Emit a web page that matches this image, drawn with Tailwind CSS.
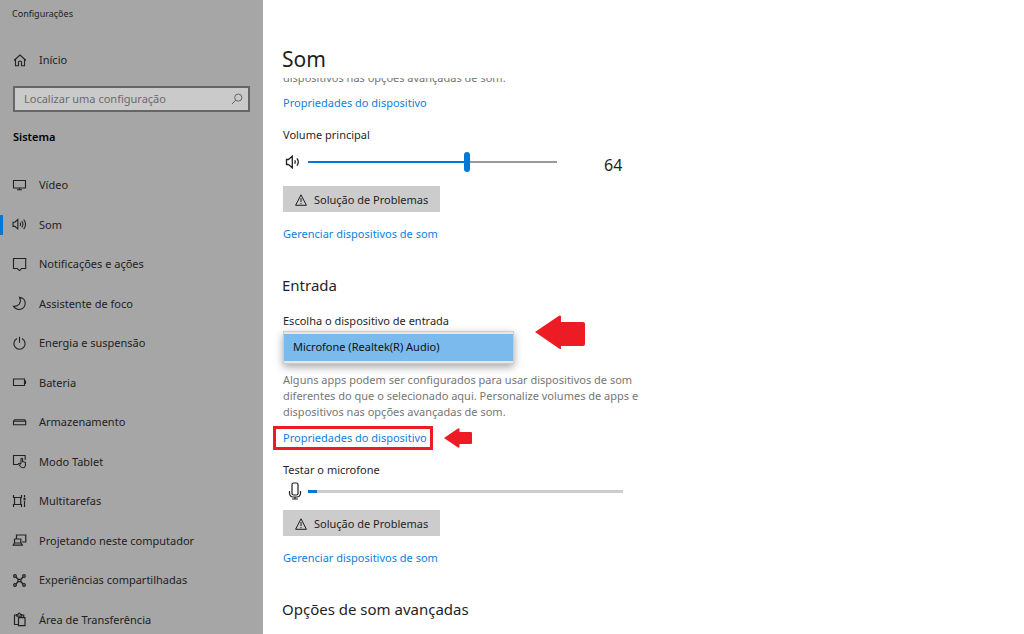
<!DOCTYPE html>
<html lang="pt-BR">
<head>
<meta charset="utf-8">
<meta name="viewport" content="width=device-width, initial-scale=1">
<title>Configurações - Som</title>
<script src="https://cdn.jsdelivr.net/npm/@tailwindcss/browser@4"></script>
</head>
<body class="flex h-screen overflow-hidden bg-white font-['Noto_Sans','Open_Sans',sans-serif] text-[11px] leading-4 text-[#1f1f1f]">

<aside class="flex w-[263px] shrink-0 flex-col bg-[#a6a6a6] text-[#222]">
  <p class="pt-[6px] pl-3 text-[9px] leading-4">Configurações</p>
  <a href="#" class="mt-[30px] flex h-4 items-center gap-3 pl-[13px]">
    <svg class="size-[14px]" viewBox="0 0 14 14" fill="none" stroke="currentColor" stroke-width="1.1"><path d="M1 7.500 7 2l6 5.500M2.500 6.500v6.200h3V9q0-1 1.500-1t1.500 1v3.700h3V6.500"/></svg>
    Início
  </a>
  <label class="relative mt-[18px] mr-[13px] ml-[13px] flex h-[26px] items-center border-2 border-[#666] bg-[#cacaca]">
    <input type="search" aria-label="Localizar uma configuração" placeholder="Localizar uma configuração" class="min-w-0 flex-1 bg-transparent pl-[9px] outline-none placeholder:text-[#6a6a6a]">
    <svg class="mr-[5px] size-3 shrink-0" viewBox="0 0 12 12" fill="none" stroke="#666" stroke-width="1"><circle cx="7.3" cy="4.6" r="3.6"/><path d="M4.7 7.2 1 11"/></svg>
  </label>
  <h1 class="mt-[17px] pl-[13px] font-semibold text-black">Sistema</h1>

  <nav class="mt-[26px] flex flex-1 flex-col justify-between">
    <a href="#" class="flex h-7 items-center gap-3 pl-3">
      <svg class="size-[15px]" viewBox="0 0 15 15" fill="none" stroke="currentColor" stroke-width="1.1"><path d="M1.500 2.500h12v7.500h-12zM5 11.700h5M7.500 10v1.500"/></svg>Vídeo</a>
    <a href="#" aria-current="page" class="flex h-7 items-center pr-3">
      <span class="h-5 w-[3px] bg-[#0078d7]"></span>
      <svg class="mr-3 ml-[9px] size-[15px]" viewBox="0 0 15 15" fill="none" stroke="currentColor" stroke-width="1.1"><path d="M1 5.200h1.800L5.800 2.500v9.400L2.800 9.400H1zM8 5.600q1.200 1.600 0 3.400M9.800 4.100q2.200 3 0 6.400M11.700 2.500q3.600 4.600 0 9.600"/></svg>Som</a>
    <a href="#" class="flex h-7 items-center gap-3 pl-3">
      <svg class="size-[15px]" viewBox="0 0 15 15" fill="none" stroke="currentColor" stroke-width="1.1"><path d="M1.500 1.500h12.200v10h-4L7.500 13.600 5.300 11.500H1.500z"/></svg>Notificações e ações</a>
    <a href="#" class="flex h-7 items-center gap-3 pl-3">
      <svg class="size-[15px]" viewBox="0 0 15 15" fill="none" stroke="currentColor" stroke-width="1.1"><path d="M7.500 1.300q5.800 1 5.700 6.200-.5 5.800-6.200 6-3.600 0-5.500-3.200 3.800.4 5.900-2.300Q9.300 4.800 7.500 1.300z"/></svg>Assistente de foco</a>
    <a href="#" class="flex h-7 items-center gap-3 pl-3">
      <svg class="size-[15px]" viewBox="0 0 15 15" fill="none" stroke="currentColor" stroke-width="1.1"><path d="M7.500 .8v6M5 2.600a5.600 5.600 0 1 0 5 0"/></svg>Energia e suspensão</a>
    <a href="#" class="flex h-7 items-center gap-3 pl-3">
      <svg class="size-[15px]" viewBox="0 0 15 15" fill="none" stroke="currentColor" stroke-width="1.1"><path d="M1.500 4h11v6.500h-11zM13.500 5.500v3.500"/></svg>Bateria</a>
    <a href="#" class="flex h-7 items-center gap-3 pl-3">
      <svg class="size-[15px]" viewBox="0 0 15 15" fill="none" stroke="currentColor" stroke-width="1.1"><path d="M1.500 6.200 2.500 4.700h10.200l1 1.500v3.600H1.500zM1.500 6.300h12"/></svg>Armazenamento</a>
    <a href="#" class="flex h-7 items-center gap-3 pl-3">
      <svg class="size-[15px]" viewBox="0 0 15 15" fill="none" stroke="currentColor" stroke-width="1.1"><path d="M6 10.500H1.500v-9h11.700V6M9 9.500V4.800q.8-1.200 1.600 0v2.700l2.800.8v3.200q-.5 2.300-2.400 2.300-1.600 0-2.700-1.300L6.500 9.800q.8-1.200 2.500.5"/></svg>Modo Tablet</a>
    <a href="#" class="flex h-7 items-center gap-3 pl-3">
      <svg class="size-[15px]" viewBox="0 0 15 15" fill="none" stroke="currentColor" stroke-width="1.200"><path d="M1.500 1v2.500h8V1M2.500 3.500v7M8.700 3.500v7M1.500 13v-2.500h8V13M12.500 1v2.500M12.500 7v6"/><path d="M11.500 4h2v2.300h-2z" fill="currentColor" stroke="none"/></svg>Multitarefas</a>
    <a href="#" class="flex h-7 items-center gap-3 pl-3">
      <svg class="size-[15px]" viewBox="0 0 15 15" fill="none" stroke="currentColor" stroke-width="1.200"><path d="M4.500 5.500v-3.500h9.300v7H10M2.500 6h6.300v4H2.500zM2.500 10l-1.200 2h9L9 10M1 12.200h9.500"/></svg>Projetando neste computador</a>
    <a href="#" class="flex h-7 items-center gap-3 pl-3">
      <svg class="size-[15px]" viewBox="0 0 15 15" fill="none" stroke="currentColor" stroke-width="1.300"><circle cx="3" cy="3" r="1.300"/><circle cx="12" cy="3" r="1.300"/><circle cx="3" cy="12" r="1.300"/><circle cx="12" cy="12" r="1.300"/><path d="M4 4 6 6.300h3L11 4M4 11 6 8.700h3L11 11M6 6.300v2.400M9 6.300v2.400"/></svg>Experiências compartilhadas</a>
    <a href="#" class="flex h-7 items-center gap-3 pl-3">
      <svg class="size-[15px]" viewBox="0 0 15 15" fill="none" stroke="currentColor" stroke-width="1.200"><path d="M6 12.500H2.500V3h2.300M9.700 3h2v2M4.800 4.200V2.500h1.200q.2-1.500 1.200-1.500t1.200 1.500h1.300v1.700zM6.500 5.700h6.500v8H6.500z"/></svg>Área de Transferência</a>
  </nav>
</aside>

<main class="flex min-w-0 flex-1 flex-col">
  <h1 class="pt-[45px] pl-[19px] text-[21px] leading-7">Som</h1>
  <div class="mt-[5px] flex min-h-0 flex-1 flex-col items-start overflow-hidden pl-5">
    <p class="-mt-2 shrink-0 text-[#767676]">dispositivos nas opções avançadas de som.</p>
    <a href="#" class="mt-[9px] text-[#0f80dc]">Propriedades do dispositivo</a>

    <label for="volume" class="mt-4">Volume principal</label>
    <div class="mt-[9px] flex h-5 items-start">
      <svg class="mt-[2px] ml-[2px] size-4" viewBox="0 0 16 16" fill="none" stroke="currentColor" stroke-width="1.300"><path d="M3.500 5.500H1.500v5h2M3.500 5.500 7.300 2.200v11.600L3.500 10.500M9.800 6.200q1 1.800 0 3.600M12 4.300q2.600 3.700 0 7.400"/></svg>
      <input id="volume" type="range" min="0" max="100" value="64" class="ml-[7px] h-5 w-[249px] appearance-none bg-transparent [&::-webkit-slider-runnable-track]:h-[2px] [&::-webkit-slider-runnable-track]:bg-[linear-gradient(to_right,#0078d7_64%,#999_64%)] [&::-webkit-slider-thumb]:-mt-[9px] [&::-webkit-slider-thumb]:h-5 [&::-webkit-slider-thumb]:w-[6px] [&::-webkit-slider-thumb]:appearance-none [&::-webkit-slider-thumb]:rounded-[3px] [&::-webkit-slider-thumb]:bg-[#0078d7]">
      <output for="volume" class="ml-[47px] text-[16px] leading-[26px]">64</output>
    </div>
    <button type="button" class="mt-[14px] flex h-[26px] w-[157px] shrink-0 items-center gap-[7px] bg-[#ccc] pt-px pl-3">
      <svg class="size-3" viewBox="0 0 12 12" fill="none" stroke="currentColor" stroke-width="1"><path d="M6 .8 11.400 11.300H.6zM6 4v4M6 9v1.200"/></svg>Solução de Problemas</button>
    <a href="#" class="mt-[14px] text-[#0f80dc]">Gerenciar dispositivos de som</a>

    <h2 class="-ml-px mt-[33px] text-[15px] leading-5">Entrada</h2>
    <label for="entrada" class="mt-[18px]">Escolha o dispositivo de entrada</label>
    <div class="relative mt-[2px] h-[33px] w-[231px] shrink-0 border border-[#ccc] bg-[#e6e6e6] py-[2px] shadow-[0_3px_8px_rgba(0,0,0,0.35)]">
      <select id="entrada" class="block h-[27px] w-full appearance-none bg-[#7abaec] pb-px pl-[9px] text-[#111] outline-none"><option>Microfone (Realtek(R) Audio)</option></select>
      <svg class="absolute top-[-17px] left-[251px] h-[34px] w-[50px]" viewBox="0 0 50 34" fill="#ed1c24"><path d="M0 17 24 .8q2-1 2 1V7h22q2 0 2 2v20q0 2-2 2H26v2q0 1.800-2 .5z"/></svg>
    </div>
    <p class="mt-2 w-[360px] text-[#767676]">Alguns apps podem ser configurados para usar dispositivos de som diferentes do que o selecionado aqui. Personalize volumes de apps e dispositivos nas opções avançadas de som.</p>
    <div class="relative mt-[10px] flex">
      <a href="#" class="text-[#0f80dc]">Propriedades do dispositivo</a>
      <span class="absolute -top-1 -left-[10px] h-6 w-[160px] border-3 border-[#ed1c24]"></span>
      <svg class="absolute top-[-2px] left-[161px] h-5 w-7" viewBox="0 0 28 20" fill="#ed1c24"><path d="M0 10 14 .5q1.500-.6 1.500 1V4H27q1 0 1 1v10q0 1-1 1H15.500v2.500q0 1.600-1.500 1z"/></svg>
    </div>

    <label for="nivel" class="mt-4">Testar o microfone</label>
    <div class="mt-[3px] flex h-5 items-center">
      <svg class="ml-1 h-[18px] w-4" viewBox="0 0 16 18" fill="none" stroke="currentColor" stroke-width="1.200"><rect x="5" y="1" width="6" height="12" rx="1.500"/><path d="M2.500 9v2.500Q3 15 6 15h4q3 0 3.500-3.500V9M8 15v2M5 17h6"/></svg>
      <progress id="nivel" value="3" max="100" class="ml-[5px] h-[3px] w-[315px] appearance-none [&::-webkit-progress-bar]:bg-[#ccc] [&::-webkit-progress-value]:bg-[#0078d7]"></progress>
    </div>
    <button type="button" class="mt-[9px] flex h-[26px] w-[157px] shrink-0 items-center gap-[7px] bg-[#ccc] pt-px pl-3">
      <svg class="size-3" viewBox="0 0 12 12" fill="none" stroke="currentColor" stroke-width="1"><path d="M6 .8 11.400 11.300H.6zM6 4v4M6 9v1.200"/></svg>Solução de Problemas</button>
    <a href="#" class="mt-[14px] text-[#0f80dc]">Gerenciar dispositivos de som</a>

    <h2 class="-ml-px mt-[33px] text-[15px] leading-5">Opções de som avançadas</h2>
  </div>
</main>
</body>
</html>
